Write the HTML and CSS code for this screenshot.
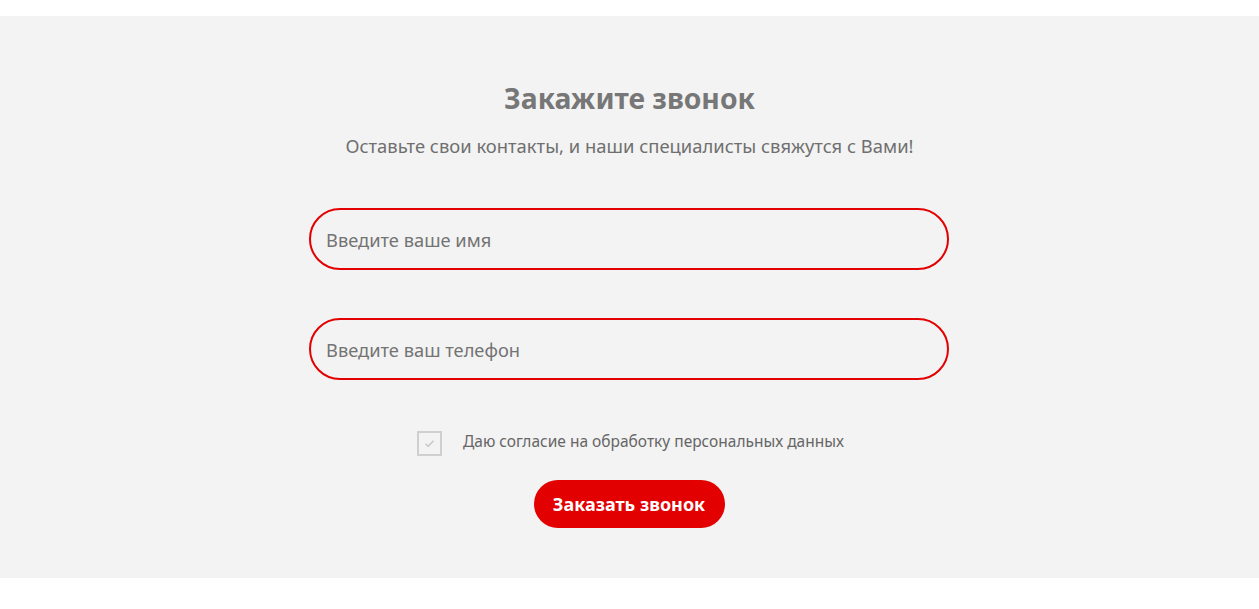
FILE: index.html
```html
<!DOCTYPE html>
<html lang="ru">
<head>
<meta charset="utf-8">
<title>Закажите звонок</title>
<link rel="stylesheet" href="styles.css">
</head>
<body>
<div class="top"></div>
<section class="callback">
  <h2 class="title">Закажите звонок</h2>
  <p class="subtitle">Оставьте свои контакты, и наши специалисты свяжутся с Вами!</p>
  <form class="form">
    <input class="field" type="text" placeholder="Введите ваше имя">
    <input class="field field-phone" type="tel" placeholder="Введите ваш телефон">
    <label class="agree">
      <span class="box"><svg width="11" height="9" viewBox="0 0 11 9"><path d="M1.5 4.8 L4.2 7.3 L9.5 1.8" fill="none" stroke="#c4c4c4" stroke-width="1.3"/></svg></span>
      <span class="agree-text">Даю согласие на обработку персональных данных</span>
    </label>
    <button class="btn" type="button">Заказать звонок</button>
  </form>
</section>
</body>
</html>
```
FILE: styles.css
```css
html, body {
  margin: 0;
  padding: 0;
  background: #fff;
}
body {
  font-family: "Noto Sans", "Open Sans", sans-serif;
}
.top {
  height: 16px;
}
.callback {
  background: #f3f3f3;
  height: 562px;
  box-sizing: border-box;
  padding-top: 65px;
  display: flex;
  flex-direction: column;
  align-items: center;
}
.title {
  margin: 0;
  font-size: 28.3px;
  line-height: 34px;
  font-weight: 700;
  color: #777;
}
.subtitle {
  margin: 19px 0 0;
  font-size: 18.4px;
  line-height: 24px;
  color: #6f6f6f;
}
.form {
  margin-top: 50px;
  display: flex;
  flex-direction: column;
  align-items: center;
  margin-right: 1px;
}
.field {
  width: 640px;
  height: 62px;
  box-sizing: border-box;
  border: 2px solid #e30000;
  border-radius: 31px;
  background: transparent;
  padding: 0 15px;
  font-family: inherit;
  font-size: 18.3px;
  color: #555;
  outline: none;
}
.field::placeholder {
  color: #737373;
}
.field-phone {
  margin-top: 48px;
}
.agree {
  margin-top: 51px;
  display: flex;
  align-items: flex-start;
  gap: 21px;
  margin-left: 3px;
}
.box {
  width: 25px;
  height: 25px;
  box-sizing: border-box;
  border: 2px solid #cfcfcf;
  display: flex;
  align-items: center;
  justify-content: center;
}
.agree-text {
  font-size: 15.5px;
  line-height: 20px;
  color: #666;
}
.btn {
  margin-top: 24px;
  width: 191px;
  height: 48px;
  border: none;
  border-radius: 24px;
  background: #e20000;
  color: #fff;
  font-family: inherit;
  font-size: 18px;
  font-weight: 700;
  cursor: pointer;
}
```
